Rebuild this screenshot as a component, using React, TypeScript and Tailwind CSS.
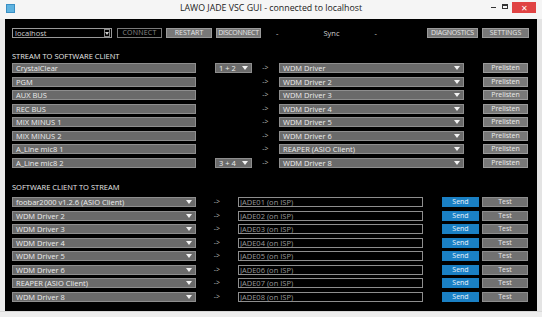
import React from "react";

const font = { fontFamily: '"Open Sans", "Noto Sans", sans-serif' };

function Arrow() {
  return (
    <svg width="6" height="4" viewBox="0 0 6 4" className="shrink-0">
      <path d="M0 0 L6 0 L3 4 Z" fill="#f2f2f2" />
    </svg>
  );
}

function GrayField({ text, arrow, w }: { text: string; arrow?: boolean; w: string }) {
  return (
    <div
      className={`${w} h-[10px] shrink-0 bg-[#6a6a6a] border border-[#8e8e8e] flex items-center pl-[3px] pr-[3px] text-[7.5px] leading-[8px] text-[#ececec]`}
    >
      <span className="flex-1 whitespace-nowrap">{text}</span>
      {arrow && <Arrow />}
    </div>
  );
}

function Btn({ text, w, cls }: { text: string; w: string; cls: string }) {
  return (
    <div
      className={`${w} h-[10px] shrink-0 flex items-center justify-center text-[7px] leading-[8px] whitespace-nowrap ${cls}`}
    >
      {text}
    </div>
  );
}

const section1 = [
  ["CrystalClear", "1 + 2", "WDM Driver"],
  ["PGM", "", "WDM Driver 2"],
  ["AUX BUS", "", "WDM Driver 3"],
  ["REC BUS", "", "WDM Driver 4"],
  ["MIX MINUS 1", "", "WDM Driver 5"],
  ["MIX MINUS 2", "", "WDM Driver 6"],
  ["A_Line mic8 1", "", "REAPER (ASIO Client)"],
  ["A_Line mic8 2", "3 + 4", "WDM Driver 8"],
];

const section2 = [
  "foobar2000 v1.2.6 (ASIO Client)",
  "WDM Driver 2",
  "WDM Driver 3",
  "WDM Driver 4",
  "WDM Driver 5",
  "WDM Driver 6",
  "REAPER (ASIO Client)",
  "WDM Driver 8",
];

export default function App() {
  return (
    <div className="w-[542px] h-[317px] bg-[#ebebeb] flex flex-col overflow-hidden" style={font}>
      {/* title bar */}
      <div className="h-[19px] shrink-0 bg-[#f5f5f5] flex items-start">
        <div className="w-[55px] shrink-0">
          <div className="mt-[4px] ml-[6px] w-[9px] h-[9px] bg-[#5fb3e0] border border-[#3a8fc4]" />
        </div>
        <div className="flex-1 flex justify-center pt-[3px]">
          <span className="text-[8.8px] leading-[11px] text-[#222] whitespace-nowrap">
            LAWO JADE VSC GUI - connected to localhost
          </span>
        </div>
        <div className="w-[55px] shrink-0 flex items-start h-[19px]">
          <div className="w-[12px] h-[13px] flex items-center justify-center">
            <div className="w-[5px] h-[1px] bg-[#333] mt-[2px]" />
          </div>
          <div className="w-[12px] h-[13px] flex items-center justify-center">
            <div className="w-[6px] h-[5px] border border-[#333] border-t-2" />
          </div>
          <div className="ml-[1px] mt-[2px] w-[24px] h-[11px] bg-[#e04343] flex items-center justify-center text-white text-[8px] leading-[8px]">
            ✕
          </div>
        </div>
      </div>

      <div className="flex shrink-0">
        <div className="w-[5px]" />
        {/* black content */}
        <div className="w-[532px] h-[292px] bg-black pl-[7px] pt-[9px] flex flex-col">
          {/* toolbar */}
          <div className="flex items-center h-[10px]">
            <div className="w-[100px] h-[10px] border border-[#9a9a9a] bg-black flex items-center text-[7.5px] leading-[8px] text-[#d0d0d0]">
              <span className="flex-1 pl-[2px]">localhost</span>
              <div className="w-[6px] h-[8px] mr-[1px] border border-[#888] flex items-center justify-center">
                <svg width="4" height="3" viewBox="0 0 4 3">
                  <path d="M0 0 L4 0 L2 3 Z" fill="#cfcfcf" />
                </svg>
              </div>
            </div>
            <Btn text="CONNECT" w="w-[45px] ml-[5px]" cls="border border-[#7a7a7a] text-[#8a8a8a] bg-black tracking-[0.2px]" />
            <Btn text="RESTART" w="w-[46px] ml-[4px]" cls="bg-[#787878] border border-[#9a9a9a] text-[#e6e6e6]" />
            <Btn text="DISCONNECT" w="w-[45px] ml-[4px]" cls="bg-[#787878] border border-[#9a9a9a] text-[#e6e6e6] tracking-[-0.3px]" />
            <span className="ml-[15px] text-[7.5px] text-[#cfcfcf] leading-[8px]">-</span>
            <span className="ml-[45px] text-[7.5px] text-[#cfcfcf] leading-[8px]">Sync</span>
            <span className="ml-[35px] text-[7.5px] text-[#cfcfcf] leading-[8px]">-</span>
            <div className="flex-1" />
            <Btn text="DIAGNOSTICS" w="w-[51px]" cls="bg-[#787878] border border-[#9a9a9a] text-[#e6e6e6] tracking-[-0.2px]" />
            <Btn text="SETTINGS" w="w-[47px] ml-[4px] mr-[8px]" cls="bg-[#787878] border border-[#9a9a9a] text-[#e6e6e6]" />
          </div>

          {/* section 1 */}
          <div className="mt-[13px] h-[10px] flex items-center text-[7.5px] leading-[9px] text-[#e8e8e8]">
            STREAM TO SOFTWARE CLIENT
          </div>
          <div className="mt-[2px] flex flex-col gap-[3.57px]">
            {section1.map(([src, ch, dst]) => (
              <div key={src} className="flex items-center h-[10px]">
                <GrayField text={src} w="w-[184px]" />
                <div className="w-[19px] shrink-0" />
                {ch ? (
                  <GrayField text={ch} arrow w="w-[37px]" />
                ) : (
                  <div className="w-[37px] shrink-0" />
                )}
                <div className="w-[27px] shrink-0 flex justify-center text-[7px] leading-[8px] text-[#bdbdbd]">
                  -&gt;
                </div>
                <GrayField text={dst} arrow w="w-[185px]" />
                <Btn
                  text="Prelisten"
                  w="w-[45px] ml-[19px]"
                  cls="bg-[#787878] border border-[#9a9a9a] text-[#ececec]"
                />
              </div>
            ))}
          </div>

          {/* section 2 */}
          <div className="mt-[15px] h-[10px] flex items-center text-[7.5px] leading-[9px] text-[#e8e8e8]">
            SOFTWARE CLIENT TO STREAM
          </div>
          <div className="mt-[4px] flex flex-col gap-[3.57px]">
            {section2.map((src, i) => (
              <div key={i} className="flex items-center h-[10px]">
                <GrayField text={src} arrow w="w-[184px]" />
                <div className="w-[42px] shrink-0 flex justify-center text-[7px] leading-[8px] text-[#bdbdbd]">
                  -&gt;
                </div>
                <div className="w-[185px] h-[10px] shrink-0 border border-[#8e8e8e] bg-black flex items-center pl-[1px] text-[7.5px] leading-[8px] text-[#9a9a9a]">
                  JADE0{i + 1} (on ISP)
                </div>
                <Btn text="Send" w="w-[37px] ml-[19px]" cls="bg-[#1a80c4] text-[#eaf4fb]" />
                <Btn
                  text="Test"
                  w="w-[46px] ml-[3px]"
                  cls="bg-[#717171] border border-[#8e8e8e] text-[#e6e6e6]"
                />
              </div>
            ))}
          </div>
        </div>
        <div className="flex-1 bg-[#e4e4e4]" />
      </div>
      <div className="flex-1 bg-[#ededed] border-t border-[#d8d8d8]" />
    </div>
  );
}
